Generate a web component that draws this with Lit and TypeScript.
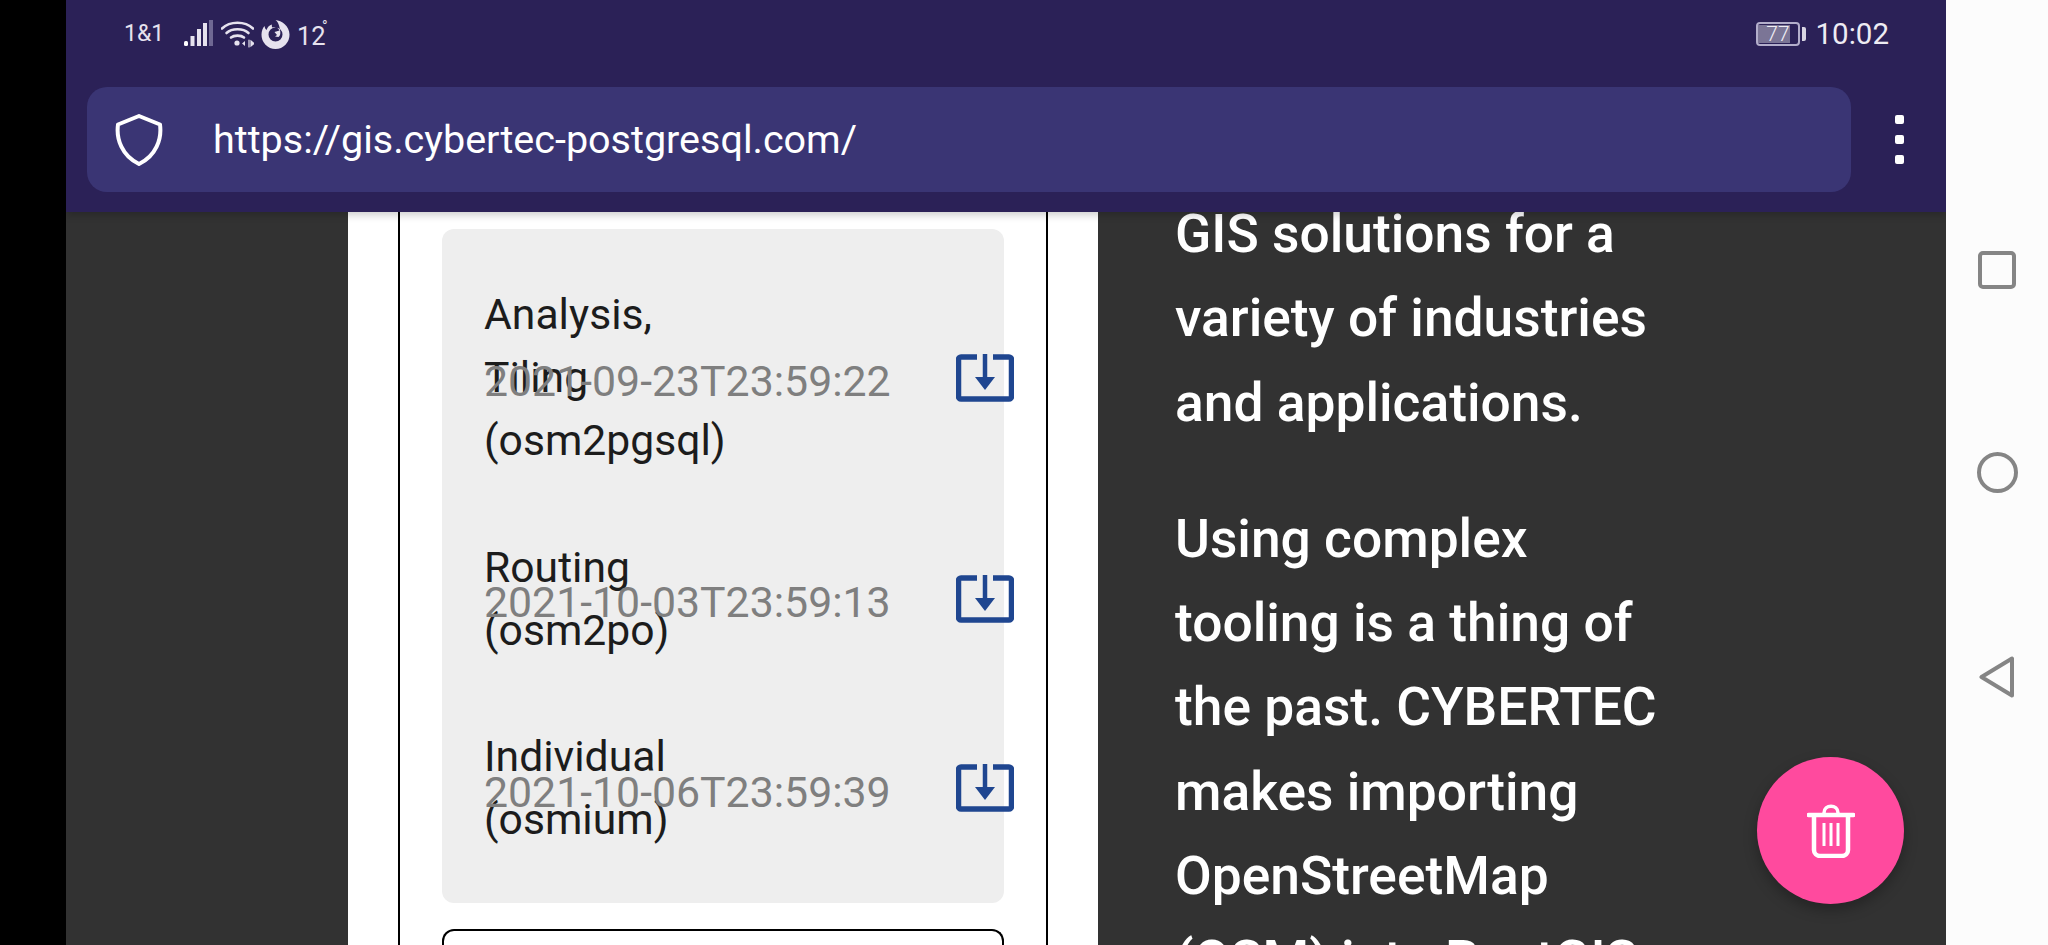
import { LitElement, html, css, svg } from "lit";
import { customElement } from "lit/decorators.js";

const rows = [
  { title: "Analysis, Tiling (osm2pgsql)", date: "2021-09-23T23:59:22" },
  { title: "Routing (osm2po)", date: "2021-10-03T23:59:13" },
  { title: "Individual (osmium)", date: "2021-10-06T23:59:39" },
];

const download = svg`<svg class="dl" viewBox="0 0 58 48" width="58" height="48" fill="none">
  <path d="M21 3H5a2.500 2.500 0 0 0-2.500 2.500v37a2.500 2.500 0 0 0 2.500 2.500h48a2.500 2.500 0 0 0 2.500-2.500v-37A2.500 2.500 0 0 0 53 3H37" stroke="#1f4690" stroke-width="5.500"/>
  <path d="M29 0v24" stroke="#1f4690" stroke-width="4.500"/>
  <path d="M19 23h20L29 36z" fill="#1f4690"/>
</svg>`;

@customElement("app-root")
export class AppRoot extends LitElement {
  static styles = css`
    :host { display: grid; grid-template-columns: 66px 1880px 102px; width: 2048px; height: 945px; overflow: hidden; font-family: Roboto, "Liberation Sans", sans-serif; background: #000; }
    .phone { display: flex; flex-direction: column; height: 945px; position: relative; overflow: hidden; }
    .chrome { height: 212px; flex: none; background: #2b2157; color: #fff; position: relative; z-index: 1; box-shadow: 0 3px 8px rgba(0,0,0,.2); }
    .status { height: 67px; padding: 0 57px 0 58px; display: flex; align-items: center; justify-content: space-between; color: #e6e2ee; }
    .st-left, .st-right { display: flex; align-items: center; }
    .carrier { font-size: 23px; width: 60px; }
    .temp { font-size: 25.5px; margin-left: 7px; padding-top: 4px; position: relative; width: 30px; }
    .deg { position: absolute; left: 25px; top: 0; font-size: 15px; }
    .sig { margin-right: 8px; }
    .wifi { margin-right: 7px; }
    .fox { margin-top: 1px; }
    .batt { display: flex; align-items: center; margin-right: 10px; }
    .batt-body { width: 44px; height: 24px; box-sizing: border-box; border: 2px solid #b3aecb; border-radius: 4px; padding: 1px 1px 1px 0; display: flex; }
    .batt-fill { width: 32px; background: #7b7596; font-size: 21px; line-height: 18px; font-weight: 300; text-align: right; color: #f0eef5; }
    .batt-nub { width: 4px; height: 14px; background: #d8d5e2; border-radius: 0 2px 2px 0; margin-left: 2px; }
    .time { font-size: 29.5px; color: #eeecf3; padding-top: 1px; }
    .tool { display: flex; align-items: center; padding: 20px 0 0 21px; }
    .url { width: 1764px; height: 105px; box-sizing: border-box; background: #3a3574; border-radius: 20px; display: flex; align-items: center; padding-left: 28px; }
    .url-text { font-size: 39.5px; margin-left: 50px; color: #fff; }
    .menu { display: flex; flex-direction: column; gap: 11px; margin-left: 44px; }
    .menu i { display: block; width: 9px; height: 9px; background: #fff; border-radius: 2px; }
    .content { flex: 1; min-height: 0; background: #323232; display: flex; padding-left: 282px; overflow: hidden; }
    .col { width: 750px; flex: none; box-sizing: border-box; background: #fff; padding: 0 50px; }
    .box { border: solid #000; border-width: 0 2px; padding: 17px 42px 0; height: 100%; box-sizing: border-box; }
    .card { background: #eee; border-radius: 12px; padding: 54px 0 52px 42px; display: flex; flex-direction: column; gap: 63.5px; }
    .row { display: grid; grid-template-columns: 472px 58px; align-items: center; }
    .cell { display: grid; align-items: center; font-size: 42.67px; line-height: 63px; }
    .title { grid-area: 1 / 1; width: 270px; color: #1c1c1c; }
    .date { grid-area: 1 / 1; color: #7f7f7f; padding-top: 8px; white-space: nowrap; font-size: 42.8px; }
    .dl { display: block; }
    .card2 { margin-top: 26px; height: 40px; border: 2px solid #000; border-bottom: 0; border-radius: 12px 12px 0 0; }
    .text { padding: 0 0 0 77px; margin-top: -20px; width: 500px; color: #fff; font-size: 53.33px; font-weight: 500; line-height: 84.3px; }
    .text p { margin: 0 0 52px; }
    .fab { position: absolute; left: 1691px; top: 757px; width: 147px; height: 147px; border-radius: 50%; background: #ff4a9e; display: flex; align-items: center; justify-content: center; box-shadow: 0 6px 14px rgba(0,0,0,.28); }
    .nav { background: #fcfcfc; border-left: 1px solid #8a8a8a; display: flex; flex-direction: column; align-items: center; padding: 251px 0 0 0; margin-left: -1px; box-sizing: border-box; gap: 163px; }
    .nav svg { display: block; }
  `;

  render() {
    return html`
      <div class="black"></div>
      <div class="phone">
        <div class="chrome">
          <div class="status">
            <div class="st-left">
              <span class="carrier">1&amp;1</span>
              <svg class="sig" width="29" height="27" viewBox="0 0 29 27">
                <rect x="0" y="21" width="4" height="5" rx="1.500" fill="#fff"/>
                <rect x="6.500" y="16" width="4" height="10" fill="#e6e2ee"/>
                <rect x="13" y="9" width="4" height="17" fill="#e6e2ee"/>
                <rect x="19" y="3" width="4" height="23" fill="#e6e2ee"/>
                <rect x="25" y="0" width="4" height="26" fill="#6f6893"/>
              </svg>
              <svg class="wifi" width="33" height="28" viewBox="0 0 33 28" fill="none" stroke="#e6e2ee" stroke-width="2.600" stroke-linecap="round">
                <path d="M1 8.500C9 .8 24 .8 32 8.500"/>
                <path d="M5.500 13C11 8 22 8 27.500 13"/>
                <path d="M10 17.500C13 15 20 15 23 17.500"/>
                <circle cx="16" cy="23" r="2.600" fill="#e6e2ee" stroke="none"/>
                <path d="M24 21l-3 2.500 3 2.500z" fill="#e6e2ee" stroke="none"/>
                <path d="M28 20v7M30 21l3 2.500-3 2.500z" fill="#e6e2ee" stroke-width="1.200"/>
              </svg>
              <svg class="fox" width="29" height="29" viewBox="0 0 29 29">
                <path fill-rule="evenodd" fill="#e6e2ee" d="M14.500 29A14.200 14.200 0 0 1 .5 14.500C.5 11 2 7.800 3.500 6c.3 2 1 3.200 2 4 1-3 3-5 5.500-5.500-.3 1.200-.3 2.500 .5 3 1.500-.6 3.500-.4 5 .5 1 .7 1.500 1.500 2 2.500l-5 1.500 2.500 3-2 1.500 3.500.5c1.500-1 2-3 1.800-5C18.500 5 17 2 14.500 0c6 .5 14 6 14 14.500A14.200 14.200 0 0 1 14.500 29zM14.500 7.500a7 7 0 1 0 7 7 7 7 0 0 0-7-7z"/>
              </svg>
              <span class="temp">12<span class="deg">°</span></span>
            </div>
            <div class="st-right">
              <div class="batt">
                <div class="batt-body"><div class="batt-fill">77</div></div>
                <div class="batt-nub"></div>
              </div>
              <span class="time">10:02</span>
            </div>
          </div>
          <div class="tool">
            <div class="url">
              <svg width="48" height="52" viewBox="0 0 48 52" fill="none" stroke="#fff" stroke-width="4" stroke-linejoin="round">
                <path d="M24 2 45 10.500C47 25 41 42 24 50 7 42 1 25 3 10.500z"/>
              </svg>
              <span class="url-text">https://gis.cybertec-postgresql.com/</span>
            </div>
            <div class="menu"><i></i><i></i><i></i></div>
          </div>
        </div>
        <div class="content">
          <div class="col">
            <div class="box">
              <div class="card">
                ${rows.map(
                  (r) => html`<div class="row">
                    <div class="cell"><span class="title">${r.title}</span><span class="date">${r.date}</span></div>
                    ${download}
                  </div>`
                )}
              </div>
              <div class="card2"></div>
            </div>
          </div>
          <div class="text">
            <p>GIS solutions for a variety of industries and applications.</p>
            <p>Using complex tooling is a thing of the past. CYBERTEC makes importing OpenStreetMap (OSM) into PostGIS</p>
          </div>
        </div>
        <div class="fab">
          <svg width="48" height="54" viewBox="0 0 48 54" fill="none" stroke="#fff">
            <path d="M1.500 11h45" stroke-width="4.500" stroke-linecap="round"/>
            <path d="M17 9c0-9 14-9 14 0" stroke-width="3.500"/>
            <path d="M7 12v34a6 6 0 0 0 6 6h22a6 6 0 0 0 6-6V12" stroke-width="4.500"/>
            <path d="M17 19v23M24 19v23M31 19v23" stroke-width="3"/>
          </svg>
        </div>
      </div>
      <div class="nav">
        <svg width="38" height="38" viewBox="0 0 38 38" fill="none" stroke="#858585" stroke-width="4"><rect x="2" y="2" width="34" height="34" rx="3"/></svg>
        <svg width="41" height="41" viewBox="0 0 41 41" fill="none" stroke="#858585" stroke-width="4"><circle cx="20.500" cy="20.500" r="18.500"/></svg>
        <svg width="36" height="42" viewBox="0 0 36 42" fill="none" stroke="#858585" stroke-width="4" stroke-linejoin="round"><path d="M33 2.500V39.500L2.500 21z"/></svg>
      </div>
    `;
  }
}
